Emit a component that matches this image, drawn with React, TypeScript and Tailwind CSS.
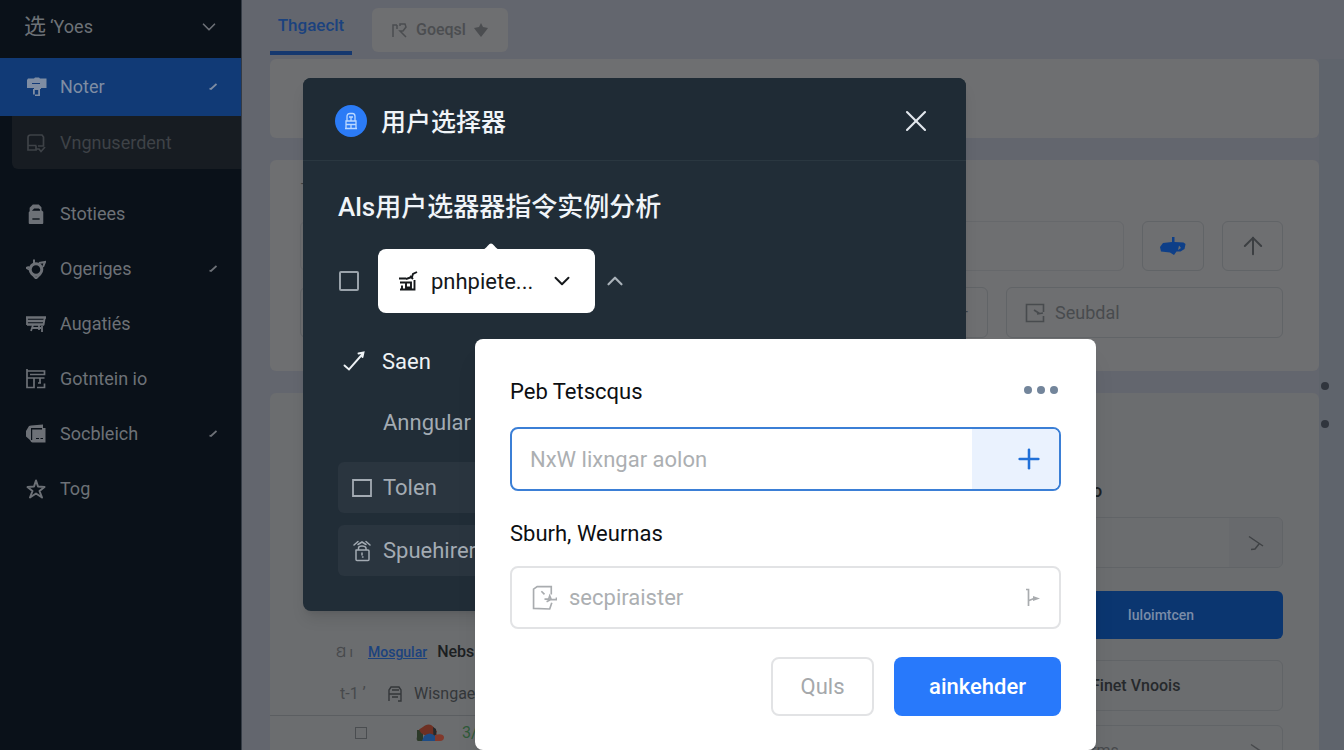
import React from "react";
import { ArrowUp, ChevronDown, ChevronUp, Plus, X } from "lucide-react";

type IconProps = { className?: string };

const RollerIcon = ({ className }: IconProps) => (
  <svg viewBox="0 0 22 20" className={className} fill="currentColor" aria-hidden="true">
    <path d="M2 1.500h6l1-1h4l1 1h6.500v9.500h-5.500v1H8v-1H1V3z" />
    <path d="M6 6.500h8" stroke="#123a78" strokeWidth="1" />
    <path d="M7 12v5.500h1.800V13h3.400v4.500H9v1.500h5v-7z" />
  </svg>
);

const DriveIcon = ({ className }: IconProps) => (
  <svg viewBox="0 0 20 20" className={className} fill="none" stroke="currentColor" strokeWidth="1.700" aria-hidden="true">
    <path d="M2 13V4.500Q2 2 4.500 2H16l1.500 2v9M2 12.500h8.500M2 12.500V17h8v-4M10 16h3l2 2.500 4-4.500M12 13h6" />
  </svg>
);

const BagIcon = ({ className }: IconProps) => (
  <svg viewBox="0 0 20 22" className={className} fill="currentColor" aria-hidden="true">
    <path d="M3 8V4L6.500 .500h6.500L16 3.500V7l2 1.500v12.500q0 1-1 1H3q-1 0-1-1V9z" />
    <path d="M5.500 7.500h9V6L13 5H8z" fill="#0a1119" />
    <path d="M6 16.500h8" stroke="#0a1119" strokeWidth="1.500" />
  </svg>
);

const SyncIcon = ({ className }: IconProps) => (
  <svg viewBox="0 0 20 20" className={className} fill="none" stroke="currentColor" aria-hidden="true">
    <circle cx="10" cy="10.500" r="5.800" strokeWidth="3" />
    <path d="M8 5V.5M13 4l6-1-2 5M3 8l-2.500 1L4 11M6 15l4 4.500 4-4" strokeWidth="2" />
  </svg>
);

const BoardIcon = ({ className }: IconProps) => (
  <svg viewBox="0 0 20 18" className={className} fill="none" stroke="currentColor" aria-hidden="true">
    <path d="M0 2.500h20M1 6h17.500M1 9.500h17" strokeWidth="2.300" />
    <path d="M1 2v8M18.800 2 17.500 10M7 10l-2 6M6 13h9M13 10v5M16 11v6" strokeWidth="1.800" />
  </svg>
);

const LayoutIcon = ({ className }: IconProps) => (
  <svg viewBox="0 0 20 20" className={className} fill="none" stroke="currentColor" strokeWidth="1.700" aria-hidden="true">
    <path d="M1 0v18.500h7V9M1 2h17.500v3.500H4M1 9h17.500M14 9v5M11 18.500h7.500v-4M12 14h3" />
  </svg>
);

const CopyIcon = ({ className }: IconProps) => (
  <svg viewBox="0 0 20 20" className={className} fill="currentColor" aria-hidden="true">
    <path fillRule="evenodd" d="M5 1.500 17 .500V4h2.500v14.500h-13Q5 18.500 4 16L0 12.500V7l3-5zM5 4v12h1.200V5.500H16V4z" />
    <path d="M10 14.500h3m1.500 0h2.500" stroke="#0a1119" strokeWidth="1.200" />
  </svg>
);

const StarIcon = ({ className }: IconProps) => (
  <svg viewBox="0 0 20 20" className={className} fill="none" stroke="currentColor" strokeWidth="2" strokeLinejoin="round" aria-hidden="true">
    <path d="m10 1.500 2 6 6.500.5-5 4 2.500 6.500-6-4-6 4L6.500 12l-5-4L8 7.500z" />
  </svg>
);

const SlashMark = ({ className }: IconProps) => (
  <svg viewBox="0 0 8 8" className={className} fill="none" stroke="currentColor" strokeWidth="1.800" aria-hidden="true">
    <path d="M.5 5.500 2 6 7.500 1" />
  </svg>
);

const UserBadgeIcon = ({ className }: IconProps) => (
  <svg viewBox="0 0 14 18" className={className} fill="none" stroke="currentColor" strokeWidth="1.300" aria-hidden="true">
    <path d="M3 9V4.500Q3 1.500 6 1.500h2.500q2.500 0 2.500 3V9M1 16.500h12M2 16V9h10v7M2 12.500h10M5 5h4M7 5v4M7 12v4" />
  </svg>
);

const PenBoxIcon = ({ className }: IconProps) => (
  <svg viewBox="0 0 20 20" className={className} fill="none" stroke="currentColor" strokeWidth="1.900" aria-hidden="true">
    <path d="M1 7.500h7M2 11.500h5M2 18.500h14.500V9M8 11.500h5v5H8zM4 14.500v4M8 8l6-2 1-3 4-2M12 5l3 3" />
  </svg>
);

const CheckArrowIcon = ({ className }: IconProps) => (
  <svg viewBox="0 0 22 20" className={className} fill="none" stroke="currentColor" strokeWidth="1.900" strokeLinecap="round" aria-hidden="true">
    <path d="M1.500 14.500 6 18.500 20 2.500M15.500 2.500l5-1L19.500 6" />
  </svg>
);

const LockWaveIcon = ({ className }: IconProps) => (
  <svg viewBox="0 0 20 22" className={className} fill="none" stroke="currentColor" strokeWidth="1.500" strokeLinecap="round" aria-hidden="true">
    <path d="M4.500 10h11.500q1 0 1 1v8.500q0 1-1 1H5q-1 0-1-1V10M6.500 10V8q0-2 3.500-2t4 2v2M2 5l4-3.500M18 5l-4-3.500M6 4.500 10 2l4 2.500M10 13v2M10.500 17h.5" />
  </svg>
);

const NoteIcon = ({ className }: IconProps) => (
  <svg viewBox="0 0 24 24" className={className} fill="none" stroke="currentColor" strokeWidth="1.600" aria-hidden="true">
    <path d="M18.500 9V1.500H5L1.500 4v18.500L17 23l2-6M9 6l3 3M12 13.500h4l1-3 1.500 3.500h5V12M14 16l4-2" />
  </svg>
);

const SquareEditIcon = ({ className }: IconProps) => (
  <svg viewBox="0 0 20 20" className={className} fill="none" stroke="currentColor" strokeWidth="1.600" aria-hidden="true">
    <path d="M18.500 9V1.500h-17v17h17V13M9 7l5.500 3.500M12 11l6-1" />
  </svg>
);

const BranchIcon = ({ className }: IconProps) => (
  <svg viewBox="0 0 16 20" className={className} fill="none" stroke="currentColor" strokeWidth="1.700" aria-hidden="true">
    <path d="M1 1.500h2.500V18M4 12.500l5-2" />
    <path d="M8 8v5l7-2.500z" fill="currentColor" stroke="none" />
  </svg>
);

const ForkIcon = ({ className }: IconProps) => (
  <svg viewBox="0 0 16 16" className={className} fill="none" stroke="currentColor" strokeWidth="1.500" aria-hidden="true">
    <path d="M1 1.500 15 11M3 14.500 7 14l4-5" />
  </svg>
);

const PlaneIcon = ({ className }: IconProps) => (
  <svg viewBox="0 0 26 18" className={className} fill="currentColor" aria-hidden="true">
    <path fillRule="evenodd" d="M12 0h2.500v5l9 .5 2 1.500-1 5-4 2.500h-4L14 18l-4-2.500-9-1L0 10l3-4 9-1zM19 8.500l-1 4.500 3-2z" />
  </svg>
);

const CloudIcon = ({ className }: IconProps) => (
  <svg viewBox="0 0 28 18" className={className} aria-hidden="true">
    <path d="M1 6h6v11H2Q0 16 1 13z" fill="#2c3a29" />
    <path d="M3 5.500Q7 3 9 1.500 14-1 17 2.500l4 5-2 4H9L5 9z" fill="#6e3023" />
    <path d="m17 3 3 2 .5 6-3 1z" fill="#24292d" />
    <path d="M8 12q6-5 11 0l1 5H6z" fill="#1d4c86" />
    <path d="M19 11q8-2 9 2 0 4-4 4h-5z" fill="#82392c" />
  </svg>
);

const navItems = [
  { label: "Stotiees", Icon: BagIcon },
  { label: "Ogeriges", Icon: SyncIcon, mark: true },
  { label: "Augatiés", Icon: BoardIcon },
  { label: "Gotntein io", Icon: LayoutIcon },
  { label: "Socbleich", Icon: CopyIcon, mark: true },
  { label: "Tog", Icon: StarIcon },
];

function Sidebar() {
  return (
    <aside className="w-[242px] shrink-0 border-r border-[#343b45] bg-[#0a1119] text-lg text-[#6d7177]">
      <button type="button" className="flex h-[58px] w-full items-center justify-between pr-[21px] pb-1 pl-6">
        <span className="flex items-center gap-1">
          <span className="text-[22px]">选</span>
          <span>‘Yoes</span>
        </span>
        <ChevronDown className="size-[22px]" strokeWidth={1.800} />
      </button>
      <nav>
        <a href="#noter" className="flex h-[58px] items-center bg-[#113a76] pr-6 pl-[26px] text-[#7f8da3]">
          <RollerIcon className="mr-3 h-5 w-[22px]" />
          <span className="flex-1">Noter</span>
          <SlashMark className="size-2" />
        </a>
        <a href="#sub" className="ml-3 flex h-[53px] items-center rounded-bl-md bg-[#171c22] pl-[14px] text-[#3e4247]">
          <DriveIcon className="mr-[14px] size-5" />
          Vngnuserdent
        </a>
        <ul className="pt-[17px]">
          {navItems.map(({ label, Icon, mark }) => (
            <li key={label}>
              <a href={"#" + label} className="flex h-[55px] items-center pr-6 pl-[26px]">
                <Icon className="mr-[14px] size-5" />
                <span className="flex-1">{label}</span>
                {mark && <SlashMark className="size-2" />}
              </a>
            </li>
          ))}
        </ul>
      </nav>
    </aside>
  );
}

function Tabs() {
  return (
    <div className="flex h-[59px] items-start gap-5" role="tablist">
      <button type="button" role="tab" aria-selected="true" className="h-[55px] w-[82px] border-b-4 border-[#15386f] text-[17px] font-medium text-[#1b427e]">
        Thgaeclt
      </button>
      <button type="button" role="tab" aria-selected="false" className="mt-2 flex h-11 items-center gap-2 rounded-md bg-[#6e6f71] px-5 text-base font-medium text-[#4b4d50]">
        <svg viewBox="0 0 16 16" className="size-4" fill="none" stroke="currentColor" strokeWidth="1.500" aria-hidden="true">
          <path d="M1 15V3h4M8 4V2h5l1 3-3 4H8l6 6M5 3v4" />
        </svg>
        Goeqsl
        <svg viewBox="0 0 14 14" className="size-[14px]" fill="currentColor" aria-hidden="true">
          <path d="m7 0 2 4 5 1-3 4-4 5-4-5-3-4 5-1z" />
        </svg>
      </button>
    </div>
  );
}

const field = "flex items-center rounded-md border border-[#616467]";

function FilterCard() {
  return (
    <section className="mt-[22px] h-[211px] shrink-0 rounded-md bg-[#6e6f71] pr-9 pl-[30px] text-[#3f4245]">
      <p className="h-[61px] pt-3 text-sm leading-6">–</p>
      <div className="flex gap-[18px]">
        <input aria-label="Filter" className="h-[50px] min-w-0 flex-1 rounded-md border border-[#66686b]" />
        <button type="button" aria-label="Send" className={`${field} h-[50px] w-[62px] justify-center text-[#0e3f88]`}>
          <PlaneIcon className="h-[18px] w-[26px]" />
        </button>
        <button type="button" aria-label="Up" className={`${field} h-[50px] w-[61px] justify-center text-[#3c3f42]`}>
          <ArrowUp className="size-7" strokeWidth={1.700} />
        </button>
      </div>
      <div className="mt-4 flex gap-[18px]">
        <div className={`${field} h-[51px] flex-1 justify-end pr-[18px]`}>–</div>
        <label className={`${field} h-[51px] w-[277px] px-[18px] text-[#484b4e]`}>
          <SquareEditIcon className="mr-[10px] size-5 shrink-0" />
          <input placeholder="Seubdal" aria-label="Seubdal" className="w-full min-w-0 text-lg placeholder:text-[#484b4e]" />
        </label>
      </div>
    </section>
  );
}

function ResultsCard() {
  return (
    <section className="mt-[22px] flex min-h-[400px] flex-1 rounded-t-md bg-[#6b6d6f] pr-9 text-base">
      <div className="min-w-0 flex-1 pt-[238px]">
        <table className="w-full">
          <tbody>
            <tr className="h-[42px]">
              <td className="w-[98px] pl-[66px] text-sm text-[#47494c]">Ꞛ ı</td>
              <td className="font-medium text-[#1c1f22]">
                <a href="#mosgular" className="mr-[10px] text-sm text-[#1b427e] underline">Mosgular</a>
                Nebs
              </td>
            </tr>
            <tr className="h-[42px] border-b border-[#5b5e61]">
              <td className="pl-[70px] text-[#47494c]">t-1 ʼ</td>
              <td className="text-[#34373a]">
                <span className="flex items-center gap-3 pl-5">
                  <svg viewBox="0 0 14 16" className="h-4 w-[14px]" fill="none" stroke="currentColor" strokeWidth="1.400" aria-hidden="true">
                    <path d="M1 15V4l2-3h8l2 3v11h-3M1 8h12M4 11h6M4 4h7" />
                  </svg>
                  Wisngae
                </span>
              </td>
            </tr>
            <tr className="h-[36px]">
              <td className="pl-[85px]">
                <input type="checkbox" aria-label="Select row" className="block size-3 appearance-none border border-[#4a4d50]" />
              </td>
              <td>
                <span className="flex items-center gap-[18px] pl-12 text-[#2f5a38]">
                  <CloudIcon className="h-[18px] w-7" />
                  3/
                </span>
              </td>
            </tr>
          </tbody>
        </table>
      </div>
      <div className="flex w-[244px] flex-col pt-[86px]">
        <p className="h-[38px] pl-[53px] text-lg leading-6 font-medium text-[#1c1f22]">o</p>
        <button type="button" aria-label="Open list" className={`${field} h-[51px] justify-end overflow-hidden`}>
          <span className="flex h-full w-[53px] items-center justify-center bg-[#686a6d] text-[#3f4245]">
            <ForkIcon className="size-4" />
          </span>
        </button>
        <button type="button" className="mt-[23px] h-12 rounded-md bg-[#0b3670] text-sm font-medium text-[#7a8ca8]">
          Iuloimtcen
        </button>
        <button type="button" className={`${field} mt-[21px] h-[51px] pl-[51px] font-medium text-[#26292c]`}>
          Finet Vnoois
        </button>
        <button type="button" className={`${field} mt-[14px] h-[51px] justify-between pr-4 pl-[51px] text-[#47494c]`}>
          rms
          <ForkIcon className="size-4" />
        </button>
      </div>
    </section>
  );
}

function PickerModal() {
  return (
    <div role="dialog" aria-label="用户选择器" className="absolute top-[78px] left-[303px] h-[533px] w-[663px] overflow-hidden rounded-lg bg-[#212d37] shadow-lg">
      <header className="flex h-[83px] items-center border-b border-[#2a3740] bg-[#1f2b35] pt-1 pr-8 pl-8 text-[#f0f4f8]">
        <span className="mr-[14px] flex size-8 items-center justify-center rounded-full bg-[#2b7bf6] text-[#bcd9ff]">
          <UserBadgeIcon className="h-[18px] w-[14px]" />
        </span>
        <h1 className="flex-1 pt-1 text-[25px] leading-8 font-medium">用户选择器</h1>
        <button type="button" aria-label="Close">
          <X className="size-9 text-[#e3e8ee]" strokeWidth={1.400} />
        </button>
      </header>
      <div className="px-[35px] pt-7">
        <h2 className="text-[26px] leading-9 font-medium text-[#f0f4f8]">Als用户选器器指令实例分析</h2>
        <div className="mt-6 flex items-center">
          <input type="checkbox" aria-label="Select" className="mr-[19px] ml-px size-5 appearance-none rounded-xs border-2 border-[#9aa3ab]" />
          <div className="relative">
            <svg viewBox="0 0 20 8" className="absolute -top-[7px] left-[103px] h-2 w-5" fill="#fff" aria-hidden="true">
              <path d="M0 8Q4 7.500 7 3.500T13 3.500 20 8z" />
            </svg>
            <button type="button" aria-haspopup="listbox" className="flex h-[64px] w-[217px] items-center rounded-lg bg-white pr-5 pl-5 text-[22px] text-[#15181b]">
              <PenBoxIcon className="mr-[13px] size-5" />
              <span className="flex-1 text-left">pnhpiete...</span>
              <ChevronDown className="size-[26px]" strokeWidth={1.800} />
            </button>
          </div>
          <button type="button" aria-label="Collapse" className="ml-[7px] text-[#aab2b9]">
            <ChevronUp className="size-[26px]" strokeWidth={2} />
          </button>
        </div>
        <ul className="mt-[19px] text-[22px] text-[#a3abb3]">
          <li className="flex h-[58px] items-center gap-[17px] pl-[5px] text-[#eef2f5]">
            <CheckArrowIcon className="h-5 w-[22px]" />
            Saen
          </li>
          <li className="flex h-[64px] items-center pl-[45px]">Anngular c</li>
        </ul>
        <div className="mt-2 flex flex-col gap-3 text-[22px] text-[#a3abb3]">
          <button type="button" className="flex h-[51px] items-center gap-[11px] rounded-md bg-[#2a353f] pl-[14px]">
            <svg viewBox="0 0 20 18" className="h-[18px] w-5" fill="none" stroke="currentColor" strokeWidth="1.800" aria-hidden="true">
              <path d="M1 1h18v16H1z" />
            </svg>
            Tolen
          </button>
          <button type="button" className="flex h-[51px] items-center gap-[11px] rounded-md bg-[#2a353f] pl-[14px]">
            <LockWaveIcon className="h-[22px] w-5" />
            Spuehirer
          </button>
        </div>
      </div>
    </div>
  );
}

function FormPopover() {
  return (
    <form className="absolute top-[339px] left-[475px] w-[621px] rounded-lg bg-white px-[35px] pt-9 pb-[34px] text-[22px] shadow-xl">
      <div className="flex h-[52px] items-start justify-between">
        <label htmlFor="teams" className="leading-[34px] text-[#0c0f12]">
          Peb Tetscqus
        </label>
        <button type="button" aria-label="More" className="mt-[11px] mr-[3px] flex gap-[5px]">
          <span className="size-2 rounded-full bg-[#73859b]" />
          <span className="size-2 rounded-full bg-[#73859b]" />
          <span className="size-2 rounded-full bg-[#73859b]" />
        </button>
      </div>
      <div className="flex h-[64px] overflow-hidden rounded-lg border-2 border-[#3b7fd6]">
        <input id="teams" placeholder="NxW lixngar aolon" className="min-w-0 flex-1 pl-[18px] placeholder:text-[#acafb2]" />
        <button type="button" aria-label="Add" className="flex w-[87px] items-center justify-end bg-[#eaf2fe] pr-[14px] text-[#2170d8]">
          <Plus className="size-8" strokeWidth={1.900} />
        </button>
      </div>
      <label htmlFor="members" className="mt-[26px] block leading-[34px] text-[#0c0f12]">
        Sburh, Weurnas
      </label>
      <div className="mt-[15px] flex h-[63px] items-center rounded-lg border-2 border-[#e2e3e5] pr-[18px] pl-5 text-[#a9acaf]">
        <NoteIcon className="mr-3 size-[25px]" />
        <input id="members" placeholder="secpiraister" className="min-w-0 flex-1 placeholder:text-[#acafb2]" />
        <BranchIcon className="h-5 w-4" />
      </div>
      <div className="mt-7 flex justify-end gap-5">
        <button type="button" className="h-[59px] w-[103px] rounded-lg border-2 border-[#e2e3e5] text-[#a5a8ab]">
          Quls
        </button>
        <button type="submit" className="h-[59px] w-[167px] rounded-lg bg-[#2879fb] font-medium text-white">
          ainkehder
        </button>
      </div>
    </form>
  );
}

export default function App() {
  return (
    <div className="relative flex h-screen overflow-hidden bg-[#63666e] font-['Roboto','Noto_Sans_CJK_SC',sans-serif]">
      <Sidebar />
      <main className="flex min-w-0 flex-1 flex-col pl-7">
        <Tabs />
        <div className="flex min-h-0 flex-1">
          <div className="flex min-w-0 flex-1 flex-col">
            <section className="h-[79px] shrink-0 rounded-md bg-[#6e6f71]" />
            <FilterCard />
            <ResultsCard />
          </div>
          <div className="flex w-[25px] flex-col gap-[30px] bg-[#5f646c] pt-[323px] pl-[2px]">
            <span className="size-2 rounded-full bg-[#30353d]" />
            <span className="size-2 rounded-full bg-[#30353d]" />
          </div>
        </div>
      </main>
      <PickerModal />
      <FormPopover />
    </div>
  );
}
